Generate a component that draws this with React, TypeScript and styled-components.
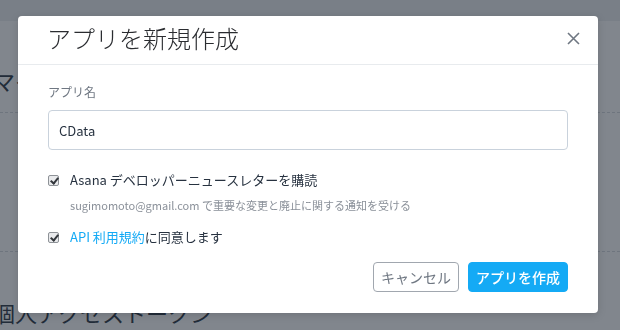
import React, { useState } from 'react';
import styled, { createGlobalStyle } from 'styled-components';

const GlobalStyle = createGlobalStyle`
  html, body {
    margin: 0;
    padding: 0;
    width: 620px;
    height: 330px;
    overflow: hidden;
    background: #ffffff;
    font-family: "Noto Sans CJK JP", "Noto Sans", sans-serif;
  }
`;

// Page behind the dialog
const Page = styled.div`
  width: 620px;
  height: 330px;
  overflow: hidden;
  background: #ffffff;
  color: #273240;
`;

const TopBar = styled.div`
  height: 21px;
  background: #eceef1;
`;

const PageSection = styled.section<{ pad: number }>`
  padding-top: ${p => p.pad}px;
  margin-left: -7px;
`;

const PageHeading = styled.h2`
  margin: 0;
  font-size: 22px;
  font-weight: 400;
  line-height: 28px;
  color: #273240;
`;

const Dashed = styled.div<{ gap: number }>`
  margin-top: ${p => p.gap}px;
  border-top: 1px dashed #d4d8de;
  width: 620px;
`;

// Overlay + modal
const Overlay = styled.div`
  position: fixed;
  inset: 0;
  background: rgba(30, 40, 52, 0.56);
  display: flex;
  align-items: flex-start;
  justify-content: flex-start;
  padding: 16px 0 0 18px;
`;

const Modal = styled.div`
  width: 580px;
  background: #ffffff;
  border-radius: 4px;
  box-shadow: 0 2px 8px rgba(0, 0, 0, 0.15);
`;

const ModalHeader = styled.div`
  height: 48px;
  border-bottom: 1px solid #e8ebee;
  display: flex;
  align-items: center;
  justify-content: space-between;
  padding: 0 17px 0 29px;
`;

const Title = styled.h1`
  margin: -4px 0 0 0;
  font-size: 24px;
  font-weight: 300;
  color: #2a2c30;
  line-height: 32px;
`;

const CloseButton = styled.button`
  width: 16px;
  height: 16px;
  margin-top: -4px;
  padding: 0;
  border: none;
  background: none;
  cursor: pointer;
  display: flex;
  align-items: center;
  justify-content: center;
`;

const Body = styled.div`
  padding: 19px 30px 21px 30px;
`;

const Label = styled.label`
  display: block;
  font-size: 12px;
  line-height: 16px;
  color: #6f7782;
`;

const TextInput = styled.input`
  box-sizing: border-box;
  display: block;
  width: 520px;
  height: 40px;
  margin-top: 10px;
  padding: 0 10px;
  border: 1px solid #c9d2dc;
  border-radius: 4px;
  font-family: "Noto Sans CJK JP", "Noto Sans", sans-serif;
  font-size: 13px;
  color: #273240;
  outline: none;
`;

const CheckRow = styled.label<{ top: number }>`
  display: flex;
  align-items: center;
  gap: 11px;
  margin-top: ${p => p.top}px;
  font-size: 13px;
  line-height: 18px;
  color: #273240;
  cursor: pointer;
`;

const Check = styled.input`
  appearance: none;
  position: relative;
  flex: none;
  margin: 0;
  width: 11px;
  height: 11px;
  box-sizing: border-box;
  border: 1px solid #8e9297;
  border-radius: 2px;
  background: #e9eaec;

  &:checked::after {
    content: '';
    position: absolute;
    left: 3px;
    top: 0px;
    width: 3px;
    height: 6px;
    border: solid #33373c;
    border-width: 0 2px 2px 0;
    transform: rotate(40deg);
  }
`;

const Hint = styled.div`
  margin: 8px 0 0 22px;
  font-size: 11px;
  line-height: 16px;
  color: #8a9099;
`;

const Link = styled.a`
  color: #14aaf5;
  text-decoration: none;
`;

const Footer = styled.div`
  display: flex;
  justify-content: flex-end;
  gap: 9px;
  margin-top: 16px;
`;

const Button = styled.button<{ primary?: boolean }>`
  box-sizing: border-box;
  height: 30px;
  padding: 0 7px;
  border-radius: 4px;
  font-family: "Noto Sans CJK JP", "Noto Sans", sans-serif;
  font-size: 14px;
  font-weight: ${p => (p.primary ? 500 : 400)};
  cursor: pointer;
  border: 1px solid ${p => (p.primary ? '#14aaf5' : '#a1a7af')};
  background: ${p => (p.primary ? '#14aaf5' : '#ffffff')};
  color: ${p => (p.primary ? '#ffffff' : '#6f7782')};
`;

const App: React.FC = () => {
  const [name, setName] = useState('CData');
  const [newsletter, setNewsletter] = useState(true);
  const [terms, setTerms] = useState(true);

  return (
    <>
      <GlobalStyle />
      <Page>
        <TopBar />
        <PageSection pad={45}>
          <PageHeading>マイアプリ</PageHeading>
        </PageSection>
        <Dashed gap={18} />
        <Dashed gap={138} />
        <PageSection pad={46}>
          <PageHeading>個人アクセストークン</PageHeading>
        </PageSection>
      </Page>

      <Overlay>
        <Modal>
          <ModalHeader>
            <Title>アプリを新規作成</Title>
            <CloseButton aria-label="閉じる">
              <svg width="13" height="13" viewBox="0 0 13 13">
                <path d="M1 1 L12 12 M12 1 L1 12" stroke="#6f7782" strokeWidth="1.6" />
              </svg>
            </CloseButton>
          </ModalHeader>
          <Body>
            <Label htmlFor="app-name">アプリ名</Label>
            <TextInput id="app-name" value={name} onChange={e => setName(e.target.value)} />

            <CheckRow top={21}>
              <Check type="checkbox" checked={newsletter} onChange={() => setNewsletter(!newsletter)} />
              <span>Asana デベロッパーニュースレターを購読</span>
            </CheckRow>
            <Hint>sugimomoto@gmail.com で重要な変更と廃止に関する通知を受ける</Hint>

            <CheckRow top={15}>
              <Check type="checkbox" checked={terms} onChange={() => setTerms(!terms)} />
              <span>
                <Link href="#">API 利用規約</Link>に同意します
              </span>
            </CheckRow>

            <Footer>
              <Button>キャンセル</Button>
              <Button primary>アプリを作成</Button>
            </Footer>
          </Body>
        </Modal>
      </Overlay>
    </>
  );
};

export default App;
